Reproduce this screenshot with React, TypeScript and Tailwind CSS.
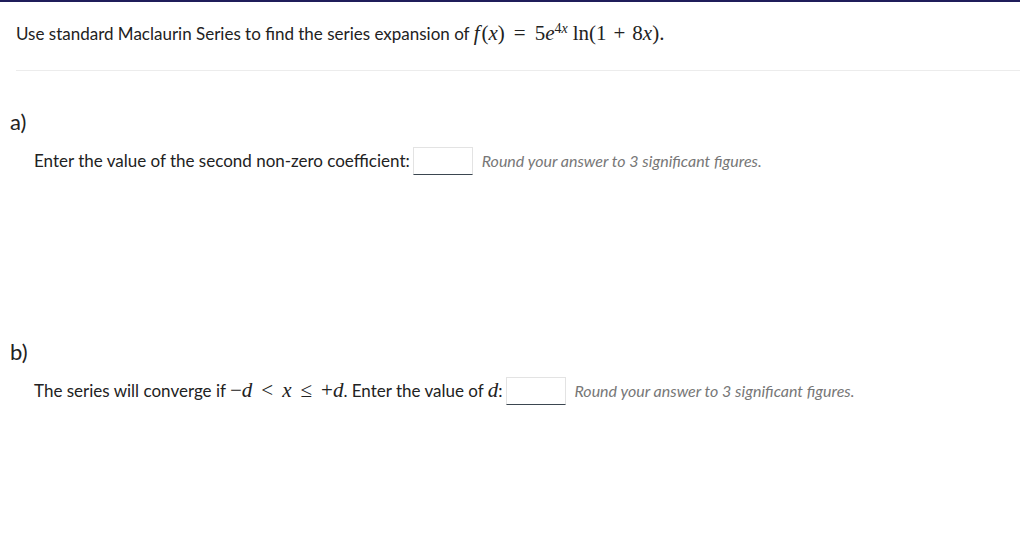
const sans = { fontFamily: 'Lato, "Noto Sans", sans-serif' };

function M({ children }: { children: React.ReactNode }) {
  return (
    <span className="text-[21px] leading-none" style={{ fontFamily: '"Liberation Serif", "Times New Roman", serif' }}>
      {children}
    </span>
  );
}

function I({ children }: { children: React.ReactNode }) {
  return <i className="italic">{children}</i>;
}

// binary / relation operator with math spacing
function Op({ children }: { children: React.ReactNode }) {
  return <span className="mx-[7px]">{children}</span>;
}

function Rel({ children }: { children: React.ReactNode }) {
  return <span className="mx-[9px]">{children}</span>;
}

function Answer() {
  return (
    <input
      type="text"
      className="mx-[3px] h-[28px] w-[60px] border border-[#e3e3e3] border-b-[#3b4650] bg-white align-middle outline-none"
    />
  );
}

function Hint() {
  return <span className="ml-[6px] text-[16px] italic text-[#777]">Round your answer to 3 significant figures.</span>;
}

export default function App() {
  return (
    <div className="min-h-[540px] w-[1020px] bg-white text-[#222]" style={sans}>
      <div className="h-[2px] bg-[#1f1d5a]" />
      <div className="pl-4">
        <p className="flex h-[68px] items-center pb-[5px] text-[17px]">
          <span>Use standard Maclaurin Series to find the series expansion of&nbsp;</span>
          <M>
            <I>f</I>
            <span className="ml-[2px]">(</span>
            <I>x</I>)<Rel>=</Rel>5<I>e</I>
            <sup className="text-[14px]">
              4<I>x</I>
            </sup>
            <span className="ml-[5px]">ln(1</span>
            <Op>+</Op>8<I>x</I>).
          </M>
        </p>
        <div className="h-px bg-[#ececec]" />
      </div>

      <section className="pl-[10px] pt-[37px]">
        <h2 className="text-[22px] leading-[28px]">a)</h2>
        <div className="mt-[11px] flex items-center pl-6 text-[17px]">
          <span>Enter the value of the second non-zero coefficient:</span>
          <Answer />
          <Hint />
        </div>
      </section>

      <section className="pl-[10px] pt-[163px]">
        <h2 className="text-[22px] leading-[28px]">b)</h2>
        <div className="mt-[11px] flex items-center pl-6 text-[17px]">
          <span>
            The series will converge if{' '}
            <M>
              −<I>d</I>
              <Rel>&lt;</Rel>
              <I>x</I>
              <Rel>≤</Rel>+<I>d</I>
            </M>
            . Enter the value of{' '}
            <M>
              <I>d</I>
            </M>
            :
          </span>
          <Answer />
          <Hint />
        </div>
      </section>
    </div>
  );
}
